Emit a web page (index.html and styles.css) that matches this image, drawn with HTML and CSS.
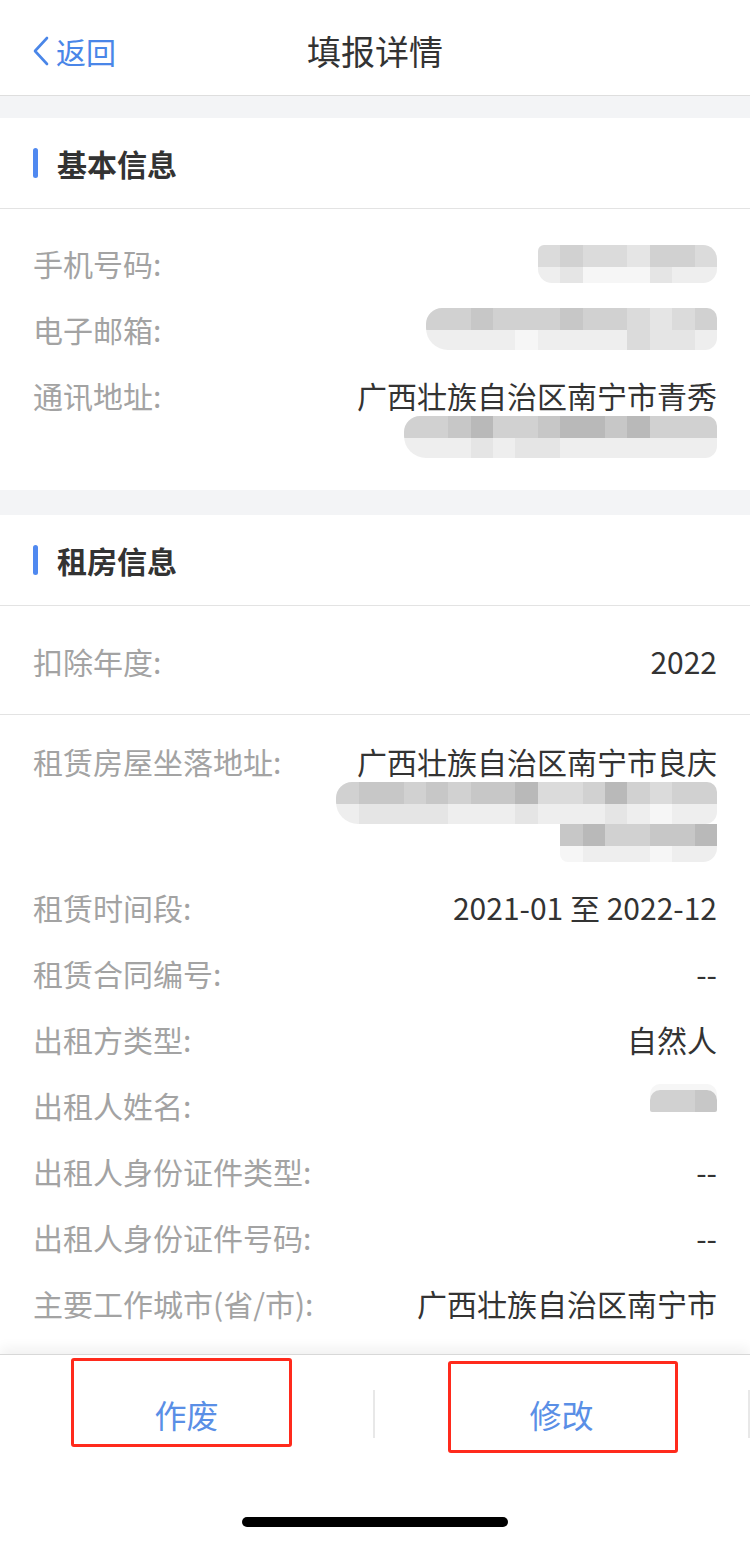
FILE: index.html
```html
<!DOCTYPE html>
<html lang="zh-CN">
<head>
    <meta charset="UTF-8">
    <meta name="viewport" content="width=device-width, initial-scale=1.0">
    <link rel="stylesheet" href="styles.css">
    <title>填报详情</title>
</head>
<body>
    <main id="pagina">
        <header id="topo">
            <a class="voltar" href="#">
                <svg width="18" height="30" viewBox="0 0 18 30">
                    <polyline points="15,2 3,15 15,28" fill="none" stroke="#4a86e8" stroke-width="2.6" stroke-linecap="round" stroke-linejoin="round"/>
                </svg>
                <span>返回</span>
            </a>
            <h1 id="titulo">填报详情</h1>
            <div></div>
        </header>

        <section class="bloco">
            <div class="bloco-titulo">
                <i class="barra"></i>
                <h2>基本信息</h2>
            </div>
            <div class="lista lista-primeira">
                <div class="linha">
                    <span class="rotulo">手机号码:</span>
                    <div class="valor">
                        <div class="mosaico m1">
                            <div class="mlinha"><b class="s5"></b><b class="s4"></b><b class="s5"></b><b class="s5"></b><b class="s6"></b><b class="s4"></b><b class="s4"></b><b class="s5"></b></div>
                            <div class="mlinha baixa"><b class="s7"></b><b class="s6"></b><b class="s8"></b><b class="s8"></b><b class="s8"></b><b class="s6"></b><b class="s7"></b><b class="s7"></b></div>
                        </div>
                    </div>
                </div>
                <div class="linha">
                    <span class="rotulo">电子邮箱:</span>
                    <div class="valor">
                        <div class="mosaico m2">
                            <div class="mlinha"><b class="s4"></b><b class="s4"></b><b class="s3"></b><b class="s4"></b><b class="s4"></b><b class="s4"></b><b class="s3"></b><b class="s4"></b><b class="s4"></b><b class="s5"></b><b class="s6"></b><b class="s5"></b><b class="s4"></b></div>
                            <div class="mlinha baixa"><b class="s7"></b><b class="s7"></b><b class="s7"></b><b class="s7"></b><b class="s8"></b><b class="s7"></b><b class="s7"></b><b class="s7"></b><b class="s7"></b><b class="s5"></b><b class="s6"></b><b class="s6"></b><b class="s7"></b></div>
                        </div>
                    </div>
                </div>
                <div class="linha">
                    <span class="rotulo">通讯地址:</span>
                    <div class="valor">
                        <span>广西壮族自治区南宁市青秀</span>
                        <div class="mosaico m3">
                            <div class="mlinha"><b class="s4"></b><b class="s4"></b><b class="s3"></b><b class="s2"></b><b class="s4"></b><b class="s4"></b><b class="s3"></b><b class="s2"></b><b class="s2"></b><b class="s3"></b><b class="s2"></b><b class="s4"></b><b class="s4"></b><b class="s4"></b></div>
                            <div class="mlinha baixa"><b class="s7"></b><b class="s7"></b><b class="s7"></b><b class="s6"></b><b class="s7"></b><b class="s6"></b><b class="s6"></b><b class="s7"></b><b class="s7"></b><b class="s7"></b><b class="s7"></b><b class="s7"></b><b class="s7"></b><b class="s7"></b></div>
                        </div>
                    </div>
                </div>
            </div>
        </section>

        <section class="bloco">
            <div class="bloco-titulo">
                <i class="barra"></i>
                <h2>租房信息</h2>
            </div>
            <div class="lista lista-ano">
                <div class="linha">
                    <span class="rotulo">扣除年度:</span>
                    <div class="valor">2022</div>
                </div>
            </div>
            <div class="lista lista-segunda">
                <div class="linha">
                    <span class="rotulo">租赁房屋坐落地址:</span>
                    <div class="valor">
                        <span>广西壮族自治区南宁市良庆</span>
                        <div class="mosaico m4">
                            <div class="mlinha"><b class="s4"></b><b class="s3"></b><b class="s3"></b><b class="s4"></b><b class="s3"></b><b class="s4"></b><b class="s3"></b><b class="s3"></b><b class="s2"></b><b class="s5"></b><b class="s5"></b><b class="s4"></b><b class="s2"></b><b class="s4"></b><b class="s5"></b><b class="s4"></b><b class="s4"></b></div>
                            <div class="mlinha baixa"><b class="s7"></b><b class="s6"></b><b class="s6"></b><b class="s6"></b><b class="s6"></b><b class="s7"></b><b class="s7"></b><b class="s7"></b><b class="s6"></b><b class="s7"></b><b class="s7"></b><b class="s7"></b><b class="s6"></b><b class="s7"></b><b class="s8"></b><b class="s7"></b><b class="s7"></b></div>
                        </div>
                        <div class="mosaico m5">
                            <div class="mlinha"><b class="s3"></b><b class="s2"></b><b class="s4"></b><b class="s4"></b><b class="s3"></b><b class="s3"></b><b class="s2"></b></div>
                            <div class="mlinha baixa"><b class="s8"></b><b class="s7"></b><b class="s7"></b><b class="s7"></b><b class="s8"></b><b class="s7"></b><b class="s7"></b></div>
                        </div>
                    </div>
                </div>
                <div class="linha">
                    <span class="rotulo">租赁时间段:</span>
                    <div class="valor">2021-01 至 2022-12</div>
                </div>
                <div class="linha">
                    <span class="rotulo">租赁合同编号:</span>
                    <div class="valor">--</div>
                </div>
                <div class="linha">
                    <span class="rotulo">出租方类型:</span>
                    <div class="valor">自然人</div>
                </div>
                <div class="linha">
                    <span class="rotulo">出租人姓名:</span>
                    <div class="valor">
                        <div class="mosaico m6">
                            <div class="mlinha"><b class="s4"></b><b class="s4"></b><b class="s3"></b></div>
                        </div>
                    </div>
                </div>
                <div class="linha">
                    <span class="rotulo">出租人身份证件类型:</span>
                    <div class="valor">--</div>
                </div>
                <div class="linha">
                    <span class="rotulo">出租人身份证件号码:</span>
                    <div class="valor">--</div>
                </div>
                <div class="linha">
                    <span class="rotulo">主要工作城市(省/市):</span>
                    <div class="valor">广西壮族自治区南宁市</div>
                </div>
            </div>
        </section>
    </main>

    <footer id="rodape">
        <div class="acoes">
            <button class="botao">作废</button>
            <i class="separador"></i>
            <button class="botao">修改</button>
            <i class="separador"></i>
        </div>
        <div class="marca marca-1"></div>
        <div class="marca marca-2"></div>
        <div class="indicador"></div>
    </footer>
</body>
</html>
```

FILE: styles.css
```css
*{
    font-family: "Noto Sans CJK SC", "Noto Sans", sans-serif;
    margin: 0;
    padding: 0;
    box-sizing: border-box;
}
body{
    display: flex;
    flex-direction: column;
    width: 100%;
    height: 100vh;
    background-color: #ffffff;
    overflow: hidden;
}

#pagina{
    flex: 1;
    overflow: hidden;
    background-color: #f3f4f6;
}

/* topo */
#topo{
    display: grid;
    grid-template-columns: 1fr auto 1fr;
    align-items: center;
    height: 96px;
    padding-top: 6px;
    background-color: #ffffff;
    border-bottom: 1px solid #dedede;
}
.voltar{
    display: flex;
    align-items: center;
    gap: 6px;
    padding-left: 32px;
    color: #4a86e8;
    font-size: 30px;
    text-decoration: none;
}
.voltar svg{
    display: block;
}
#titulo{
    font-size: 34px;
    font-weight: 400;
    color: #333333;
}

/* blocos */
.bloco{
    margin-top: 22px;
    background-color: #ffffff;
}
.bloco + .bloco{
    margin-top: 25px;
}
.bloco-titulo{
    display: flex;
    align-items: center;
    height: 91px;
    padding-left: 33px;
    border-bottom: 1px solid #e3e3e3;
}
.barra{
    width: 5px;
    height: 30px;
    border-radius: 3px;
    background-color: #5089f0;
}
.bloco-titulo h2{
    margin-left: 19px;
    font-size: 30px;
    font-weight: 700;
    color: #333333;
}

.lista{
    padding: 0 33px;
}
.lista-primeira{
    padding-top: 21px;
    padding-bottom: 20px;
}
.lista-ano{
    padding-top: 34px;
    padding-bottom: 32px;
    border-bottom: 1px solid #e3e3e3;
}
.lista-ano .linha{
    padding: 0;
}
.lista-segunda{
    padding-top: 13px;
    padding-bottom: 20px;
}
.linha{
    display: flex;
    justify-content: space-between;
    align-items: flex-start;
    gap: 20px;
    padding: 12px 0;
    font-size: 30px;
    line-height: 42px;
}
.rotulo{
    color: #a3a3a3;
    white-space: nowrap;
}
.valor{
    display: flex;
    flex-direction: column;
    align-items: flex-end;
    color: #333333;
    text-align: right;
    white-space: nowrap;
}

/* mosaico */
.mosaico{
    display: flex;
    flex-direction: column;
    overflow: hidden;
    border-radius: 6px 14px 14px 14px;
}
.mosaico.m1{
    margin-top: 3px;
    height: 38px;
}
.mosaico.m2,
.mosaico.m3,
.mosaico.m4{
    border-radius: 16px 10px 12px 22px;
}
.mosaico.m5{
    border-radius: 0 0 14px 8px;
    height: 38px;
}
.mosaico.m6{
    margin-top: 6px;
    border-radius: 10px 10px 2px 2px;
    box-shadow: 0 -6px 0 #f6f6f6;
}
.mlinha{
    display: flex;
}
.mlinha b{
    display: block;
    width: 22.4px;
    height: 22px;
}
.mlinha.baixa b{
    height: 20px;
}
.m1 .mlinha.baixa b,
.m5 .mlinha.baixa b{
    height: 16px;
}
.s1{ background-color: #a8a8a8; }
.s2{ background-color: #b9b9b9; }
.s3{ background-color: #c7c7c7; }
.s4{ background-color: #d1d1d1; }
.s5{ background-color: #dbdbdb; }
.s6{ background-color: #e5e5e5; }
.s7{ background-color: #eeeeee; }
.s8{ background-color: #f6f6f6; }

/* rodape */
#rodape{
    position: relative;
    flex: none;
    display: flex;
    flex-direction: column;
    align-items: center;
    height: 187px;
    background-color: #ffffff;
    border-top: 1px solid #d8d8d8;
    box-shadow: 0 -6px 12px rgba(0, 0, 0, 0.06);
}
.acoes{
    display: flex;
    align-items: center;
    width: 100%;
    height: 118px;
}
.botao{
    flex: 1;
    height: 100%;
    border: none;
    background-color: transparent;
    color: #5a8fe6;
    font-size: 32px;
    cursor: pointer;
}
.separador{
    width: 2px;
    height: 48px;
    background-color: #e8e8e8;
}
.marca{
    position: absolute;
    border: 3px solid #ff2a1c;
    border-radius: 3px;
}
.marca-1{
    left: 71px;
    top: 3px;
    width: 221px;
    height: 89px;
}
.marca-2{
    left: 448px;
    top: 6px;
    width: 230px;
    height: 92px;
}
.indicador{
    margin-top: 44px;
    width: 266px;
    height: 10px;
    border-radius: 5px;
    background-color: #000000;
}
```
